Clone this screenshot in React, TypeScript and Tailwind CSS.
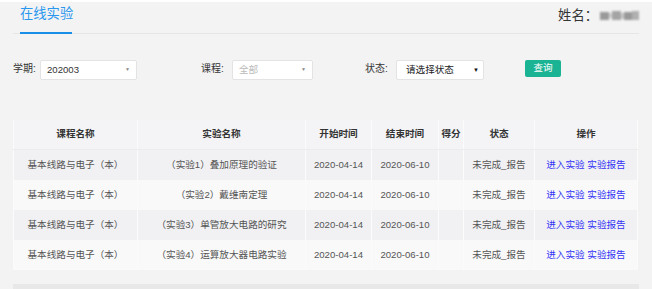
import React from "react";

const rows = [
  { course: "基本线路与电子（本）", exp: "（实验1）叠加原理的验证", h: "h-[31px]", bg: "bg-[#f1f1f3]" },
  { course: "基本线路与电子（本）", exp: "（实验2）戴维南定理", h: "h-[30px]", bg: "bg-[#f9f9f9]" },
  { course: "基本线路与电子（本）", exp: "（实验3）单管放大电路的研究", h: "h-[30px]", bg: "bg-[#f1f1f3]" },
  { course: "基本线路与电子（本）", exp: "（实验4）运算放大器电路实验", h: "h-[30px]", bg: "bg-[#f9f9f9]" },
];

export default function App() {
  return (
    <div
      className="w-[652px] h-[289px] overflow-hidden bg-[#f3f3f3] border-t-[2px] border-white"
      style={{ fontFamily: '"Liberation Sans", "Noto Sans CJK SC", sans-serif' }}
    >
      {/* header */}
      <div className="mx-[13px] h-[32px] border-b border-[#e6e6e6] flex justify-between">
        <div className="ml-[7px] w-[52px] -mb-px border-b-2 border-[#1a8fe8] flex items-start pt-[3px]">
          <span className="text-[13.3px] leading-[18px] text-[#2a97ee] whitespace-nowrap">在线实验</span>
        </div>
        <div className="flex items-start pt-[5px]">
          <span className="text-[13.3px] leading-[18px] text-[#333]">姓名：</span>
          <div className="flex items-center mt-[4px] ml-[2px] blur-[0.8px]">
            <div className="w-[9px] h-[8px] bg-[#9a9a9a]" />
            <div className="w-[3px] h-[5px] bg-[#d0d0d0]" />
            <div className="w-[9px] h-[9px] bg-[#a4a4a4]" />
            <div className="w-[3px] h-[6px] bg-[#c8c8c8]" />
            <div className="w-[8px] h-[8px] bg-[#999]" />
            <div className="w-[7px] h-[9px] bg-[#b0b0b0]" />
          </div>
        </div>
      </div>

      {/* filters */}
      <div className="flex items-start pl-[13px] mt-[26px] h-[20px]">
        <span className="w-[27px] pt-[3px] text-[10px] leading-[12px] text-[#333] whitespace-nowrap">学期:</span>
        <div className="w-[97px] h-[20px] bg-white border border-[#e3e3e3] rounded-[2px] flex items-center justify-between pl-[6px] pr-[6px]">
          <span className="text-[9.6px] text-[#333]">202003</span>
          <span className="text-[5px] text-[#888]">▼</span>
        </div>
        <span className="ml-[64px] w-[31px] pt-[3px] text-[10px] leading-[12px] text-[#333] whitespace-nowrap">课程:</span>
        <div className="w-[81px] h-[20px] bg-white border border-[#e3e3e3] rounded-[2px] flex items-center justify-between pl-[6px] pr-[6px]">
          <span className="text-[9.6px] text-[#bbb]">全部</span>
          <span className="text-[5px] text-[#888]">▼</span>
        </div>
        <span className="ml-[52px] w-[31px] pt-[3px] text-[10px] leading-[12px] text-[#333] whitespace-nowrap">状态:</span>
        <div className="w-[88px] h-[20px] bg-white border border-[#e3e3e3] rounded-[2px] flex items-center justify-between pl-[9px] pr-[4px]">
          <span className="text-[9.6px] text-[#222]">请选择状态</span>
          <span className="text-[6px] text-[#111]">▼</span>
        </div>
        <div className="ml-[41px] w-[36px] h-[17px] bg-[#1ab394] rounded-[2px] flex items-center justify-center">
          <span className="text-[9.6px] text-white">查询</span>
        </div>
      </div>

      {/* table */}
      <div className="mx-[13px] mt-[40px]">
        <table className="w-[624px] table-fixed border-collapse text-[9.6px]">
          <colgroup>
            <col className="w-[124px]" />
            <col className="w-[168px]" />
            <col className="w-[66px]" />
            <col className="w-[67px]" />
            <col className="w-[25px]" />
            <col className="w-[71px]" />
            <col className="w-[103px]" />
          </colgroup>
          <thead>
            <tr className="h-[29px] bg-[#f4f4f6]">
              {["课程名称", "实验名称", "开始时间", "结束时间", "得分", "状态", "操作"].map((t) => (
                <th key={t} className="font-bold text-[#333] text-center p-0 border-x border-[#fbfbfb] border-b border-b-[#ececec] whitespace-nowrap">
                  {t}
                </th>
              ))}
            </tr>
          </thead>
          <tbody>
            {rows.map((r, i) => (
              <tr key={i} className={`${r.h} ${r.bg}`}>
                <td className="text-center text-[#555] p-0 border-x border-[#fbfbfb] whitespace-nowrap">{r.course}</td>
                <td className="text-center text-[#555] p-0 border-x border-[#fbfbfb] whitespace-nowrap">{r.exp}</td>
                <td className="text-center text-[#555] p-0 border-x border-[#fbfbfb]">2020-04-14</td>
                <td className="text-center text-[#555] p-0 border-x border-[#fbfbfb]">2020-06-10</td>
                <td className="text-center text-[#555] p-0 border-x border-[#fbfbfb]"></td>
                <td className="text-center text-[#555] p-0 border-x border-[#fbfbfb] whitespace-nowrap">未完成_报告</td>
                <td className="text-center p-0 border-x border-[#fbfbfb] whitespace-nowrap">
                  <span className="text-[#3333f5]">进入实验</span>{" "}
                  <span className="text-[#3333f5]">实验报告</span>
                </td>
              </tr>
            ))}
          </tbody>
        </table>
      </div>

      {/* bottom bar */}
      <div className="mx-[13px] mt-[14px] h-[6px] bg-[#e8e8e8]" />
    </div>
  );
}
